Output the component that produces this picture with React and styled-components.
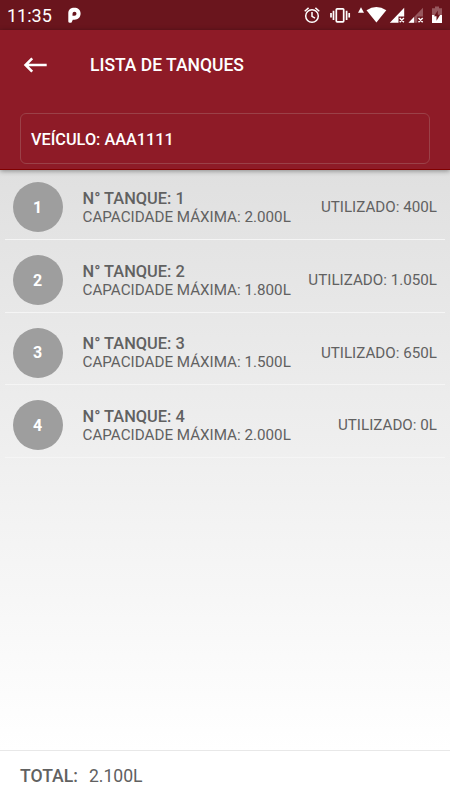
import React from "react";
import styled, { createGlobalStyle } from "styled-components";

const GlobalStyle = createGlobalStyle`
  * {
    box-sizing: border-box;
  }

  body {
    margin: 0;
    font-family: Roboto, "Liberation Sans", sans-serif;
  }
`;

const Tela = styled.div`
  display: flex;
  flex-direction: column;
  width: 450px;
  height: 800px;
  overflow: hidden;
  background-color: #ffffff;
`;

const StatusBar = styled.div`
  display: flex;
  align-items: center;
  flex: none;
  height: 30px;
  padding-left: 7px;
  background-color: #6a151d;
  color: #ffffff;
`;

const Hora = styled.span`
  width: 61px;
  font-size: 18px;
  line-height: 30px;
  padding-top: 1px;
  white-space: nowrap;
`;

const StatusIcones = styled.svg`
  display: block;
  margin-left: auto;
`;

const Header = styled.header`
  display: flex;
  flex-direction: column;
  flex: none;
  z-index: 1;
  height: 140px;
  padding: 0 20px;
  background-color: #8e1b27;
  border-bottom: 1px solid #800000;
  box-shadow: 0 1px 5px rgba(0, 0, 0, 0.4);
  color: #ffffff;
`;

const Toolbar = styled.div`
  display: flex;
  align-items: center;
  height: 70px;
  margin-bottom: 13px;
`;

const BotaoVoltar = styled.button`
  display: flex;
  width: 70px;
  padding: 0 0 0 3px;
  border: none;
  background: none;
  color: inherit;
`;

const Titulo = styled.h1`
  margin: 0;
  font-size: 17.5px;
  font-weight: 500;
  white-space: nowrap;
`;

const VeiculoBox = styled.div`
  display: flex;
  align-items: center;
  height: 51px;
  padding: 1px 10px 0;
  border: 1px solid #9b4148;
  border-radius: 6px;
  font-size: 16.3px;
  font-weight: 500;
`;

const Lista = styled.ul`
  flex: 1;
  margin: 0;
  padding: 0 5px;
  list-style: none;
  background: linear-gradient(#e0e0e0, #ffffff);
`;

const Item = styled.li`
  display: flex;
  align-items: center;
  height: 72.5px;
  padding: 14.9px 8px 6.6px 7.5px;
  border-bottom: 1px solid #f5f5f5;
  color: #616161;

  &:first-child {
    height: 70.2px;
    padding: 12.4px 8px 6.8px 7.5px;
  }
`;

const Numero = styled.div`
  display: flex;
  justify-content: center;
  align-items: center;
  flex: none;
  width: 50px;
  height: 50px;
  margin-right: 20px;
  border-radius: 50%;
  background-color: #9e9e9e;
  color: #ffffff;
  font-size: 16px;
  font-weight: 700;
`;

const Info = styled.div`
  display: flex;
  flex-direction: column;
  padding-top: 1px;
  line-height: 18px;
  white-space: nowrap;
`;

const Tanque = styled.span`
  font-size: 16.4px;
  font-weight: 500;
`;

const Detalhe = styled.span`
  margin-left: ${(props) => (props.$direita ? "auto" : "0")};
  font-size: 15.2px;
  white-space: nowrap;
`;

const Rodape = styled.footer`
  display: flex;
  align-items: center;
  flex: none;
  gap: 11px;
  height: 50px;
  padding: 0 20px;
  border-top: 1px solid #e8e8e8;
  color: #616161;
  font-size: 17.6px;

  strong {
    font-weight: 500;
  }
`;

const tanques = [
  { numero: 1, capacidade: "2.000L", utilizado: "400L" },
  { numero: 2, capacidade: "1.800L", utilizado: "1.050L" },
  { numero: 3, capacidade: "1.500L", utilizado: "650L" },
  { numero: 4, capacidade: "2.000L", utilizado: "0L" },
];

const LogoP = () => (
  <svg width="14" height="18" viewBox="0 0 14 18">
    <path
      fill="#fff"
      fillRule="evenodd"
      d="M0.3 15.5V7.3C0.3 3.6 2.8 1.8 6.3 1.8S12.6 3.8 12.6 7.6S9.9 13.8 6.5 13.8H4.8L3.6 16.6Q0.3 17.4 0.3 15.5ZM6.5 5.7A2 2 0 0 0 4.5 7.7V9.7H6.5A2 2 0 0 0 6.5 5.7Z"
    />
  </svg>
);

const Icones = () => (
  <StatusIcones width="155" height="30" viewBox="295 0 155 30">
    {/* alarme */}
    <g fill="none" stroke="#fff" strokeWidth="1.5">
      <circle cx="312" cy="16" r="6.3" />
      <path d="M312 12V16.4L315 18.2M304.7 11.2L308.6 7.9M319.3 11.2L315.4 7.9" />
    </g>
    {/* vibrar */}
    <g fill="none" stroke="#fff" strokeWidth="1.7">
      <rect x="336.3" y="8.8" width="7.4" height="13" rx="0.8" />
      <path d="M333.5 10.7V20M331 13V17.5M346.6 10.7V20M349.2 13V17.5" />
    </g>
    {/* wifi */}
    <path fill="#fff" d="M361 7.2L364 12.8H358Z" />
    <path fill="#fff" d="M366.5 10.3Q376.4 3.6 386.3 10.3L376.4 22.6Z" />
    {/* sinal */}
    <path fill="#fff" d="M404.2 7.8V16.5H398.5V22.7H389.8Z" />
    <path fill="#97585e" d="M423 7.8V16.5H417.3V22.7H408.5Z" />
    <path fill="#fff" d="M414 17V22.7H408.5Z" />
    <path
      fill="none"
      stroke="#fff"
      strokeWidth="1.5"
      d="M399.7 18L403.9 22.2M403.9 18L399.7 22.2M418.5 18L422.7 22.2M422.7 18L418.5 22.2"
    />
    {/* bateria */}
    <path fill="#97585e" d="M432 8.3H435V6.5H439V8.3H442V15H432Z" />
    <path fill="#fff" d="M432 15H442V23H432Z" />
    <path fill="#6a151d" d="M437.8 10.5L434 16.2H436.5V20.8L440.2 14.8H437.8Z" />
  </StatusIcones>
);

class App extends React.Component {
  state = {
    veiculo: "AAA1111",
    total: "2.100L",
  };

  render() {
    return (
      <>
        <GlobalStyle />
        <Tela>
          <StatusBar>
            <Hora>11:35</Hora>
            <LogoP />
            <Icones />
          </StatusBar>

          <Header>
            <Toolbar>
              <BotaoVoltar aria-label="Voltar">
                <svg width="26" height="18" viewBox="0 0 26 18">
                  <path
                    fill="none"
                    stroke="#fff"
                    strokeWidth="2.6"
                    d="M23.7 9H2.5M9.2 2.4L2.6 9L9.2 15.6"
                  />
                </svg>
              </BotaoVoltar>
              <Titulo>LISTA DE TANQUES</Titulo>
            </Toolbar>
            <VeiculoBox>VEÍCULO: {this.state.veiculo}</VeiculoBox>
          </Header>

          <Lista>
            {tanques.map((tanque) => (
              <Item key={tanque.numero}>
                <Numero>{tanque.numero}</Numero>
                <Info>
                  <Tanque>N° TANQUE: {tanque.numero}</Tanque>
                  <Detalhe>CAPACIDADE MÁXIMA: {tanque.capacidade}</Detalhe>
                </Info>
                <Detalhe $direita>UTILIZADO: {tanque.utilizado}</Detalhe>
              </Item>
            ))}
          </Lista>

          <Rodape>
            <strong>TOTAL:</strong>
            <span>{this.state.total}</span>
          </Rodape>
        </Tela>
      </>
    );
  }
}

export default App;
